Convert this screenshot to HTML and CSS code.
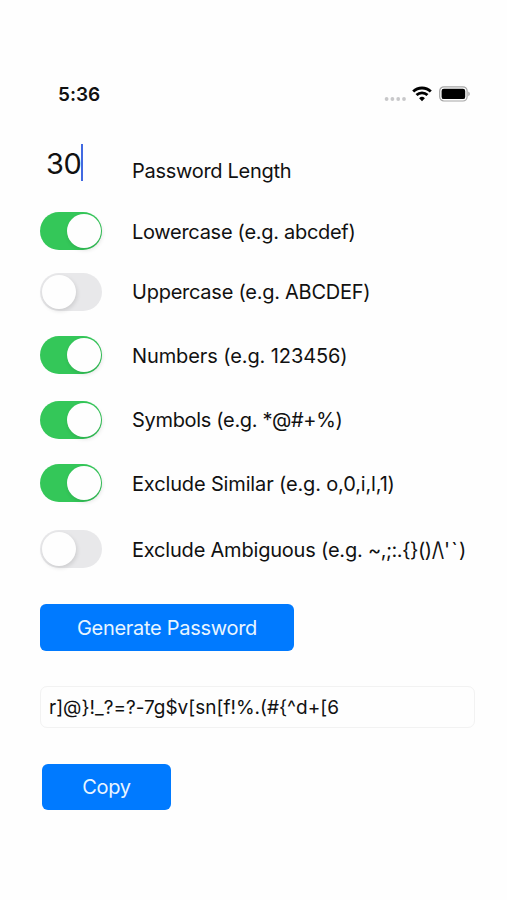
FILE: index.html
```
<!DOCTYPE html>
<html lang="en">
<head>
<meta charset="utf-8">
<meta name="viewport" content="width=device-width, initial-scale=1">
<title>Password Generator</title>
<link rel="stylesheet" href="styles.css">
</head>
<body>
<header class="status">
  <span class="time">5:36</span>
  <span class="indicators">
    <svg class="dots" viewBox="0 0 22 5" width="22" height="5" fill="#c8c8ca"><circle cx="2.6" cy="2" r="1.9"/><circle cx="8.4" cy="2" r="1.9"/><circle cx="14.2" cy="2" r="1.9"/><circle cx="20" cy="2" r="1.9"/></svg>
    <svg class="wifi" viewBox="0 0 20 16" width="20" height="16" fill="none" stroke="#000" stroke-width="2.8"><path d="M1.2 5.6A12.5 12.5 0 0 1 18.8 5.6"/><path d="M4.5 9.1A7.9 7.9 0 0 1 15.5 9.1"/><path d="M10 15.2 7.1 12.2A4.2 4.2 0 0 1 12.9 12.2Z" fill="#000" stroke="none"/></svg>
    <svg class="battery" viewBox="0 0 32 16" width="32" height="16"><rect x=".7" y=".8" width="27.4" height="14.2" rx="4.2" fill="none" stroke="#a5a5a5" stroke-width="1.2"/><rect x="2.6" y="2.7" width="23.6" height="10.4" rx="2.2"/><path d="M29.3 5.6Q30.8 6.4 30.8 7.9T29.3 10.2Z" fill="#a5a5a5"/></svg>
  </span>
</header>
<main class="form">
  <div class="length-row">
    <span class="length">30</span><span class="caret"></span>
    <span class="label">Password Length</span>
  </div>
  <div class="row lower"><span class="switch on"></span><span class="label">Lowercase (e.g. abcdef)</span></div>
  <div class="row upper"><span class="switch"></span><span class="label">Uppercase (e.g. ABCDEF)</span></div>
  <div class="row numbers"><span class="switch on"></span><span class="label">Numbers (e.g. 123456)</span></div>
  <div class="row symbols"><span class="switch on"></span><span class="label">Symbols (e.g. *@#+%)</span></div>
  <div class="row similar"><span class="switch on"></span><span class="label">Exclude Similar (e.g. o,0,i,l,1)</span></div>
  <div class="row ambiguous"><span class="switch"></span><span class="label">Exclude Ambiguous (e.g. <span class="braces">~,;:.{}()</span><span class="slash">/</span><span class="marks">\'`)</span></span></div>
  <button class="button generate">Generate Password</button>
  <div class="output">r]@}!_?=?-7g$v[sn[f!%.(#{^d+[6</div>
  <button class="button copy">Copy</button>
</main>
</body>
</html>
```
FILE: styles.css
```
* { box-sizing: border-box; }
body {
  margin: 0;
  min-height: 900px;
  background: #fefefe;
  color: #111;
  font-family: Inter, "Liberation Sans", sans-serif;
  font-size: 20px;
  line-height: 24px;
  letter-spacing: -.29px;
  font-feature-settings: "calt" 0;
}
.status {
  display: flex;
  justify-content: space-between;
  align-items: center;
  height: 24px;
  margin-top: 82px;
  padding: 0 36px 0 58px;
}
.time { font-size: 19px; font-weight: 600; letter-spacing: 0; padding-top: 1px; }
.indicators { display: flex; align-items: center; }
.dots { margin: 10px 6px 0 0; }
.wifi { margin-right: 7px; }
.form { padding: 0 32px 0 40px; }
.length-row {
  display: flex;
  align-items: flex-start;
  height: 38px;
  margin-top: 38px;
  padding-left: 6px;
}
.length { font-size: 29px; line-height: 40px; width: 34.5px; letter-spacing: -.5px; white-space: nowrap; }
.caret { width: 2.5px; height: 37px; background: #4169e1; }
.length-row .label { margin: 15px 0 0 49px; }
.row {
  display: flex;
  align-items: center;
  gap: 30px;
  height: 38px;
}
.label { white-space: nowrap; }
.row .label { padding-top: 2px; }
.lower { margin-top: 30px; }
.upper { margin-top: 22.5px; }
.row.upper .label { padding-top: 0; letter-spacing: -.25px; }
.numbers { margin-top: 25.5px; }
.numbers .label { letter-spacing: -.1px; }
.symbols { margin-top: 26.5px; }
.row.symbols .label { padding-top: 0; letter-spacing: -.32px; }
.similar { margin-top: 25.5px; }
.similar .label { letter-spacing: -.15px; }
.ambiguous { margin-top: 28px; }
.ambiguous .label { letter-spacing: -.2px; }
.braces { letter-spacing: -.5px; }
.slash { letter-spacing: -1.8px; }
.marks { letter-spacing: 1.3px; }
.switch {
  flex: none;
  width: 62px;
  height: 38px;
  padding: 2px;
  border-radius: 19px;
  background: #e8e8ea;
}
.switch::before {
  content: "";
  display: block;
  width: 34px;
  height: 34px;
  border-radius: 50%;
  background: #fefefe;
  box-shadow: 1px 2px 4px rgba(0, 0, 0, .12);
}
.switch.on { background: #34c759; }
.switch.on::before { margin-left: 24.5px; }
.button {
  display: block;
  border: 0;
  border-radius: 6px;
  background: #007aff;
  color: #e8f5ff;
  font: inherit;
  letter-spacing: inherit;
}
.generate { width: 254px; height: 47px; margin-top: 36px; }
.output {
  width: 435px;
  height: 42px;
  margin-top: 35px;
  padding: 0 8px;
  border: 1px solid #f2f2f2;
  border-radius: 7px;
  line-height: 42px;
  font-size: 19px;
  letter-spacing: 0;
  white-space: nowrap;
}
.copy { width: 129px; height: 46px; margin: 36px 0 0 2px; }
```
